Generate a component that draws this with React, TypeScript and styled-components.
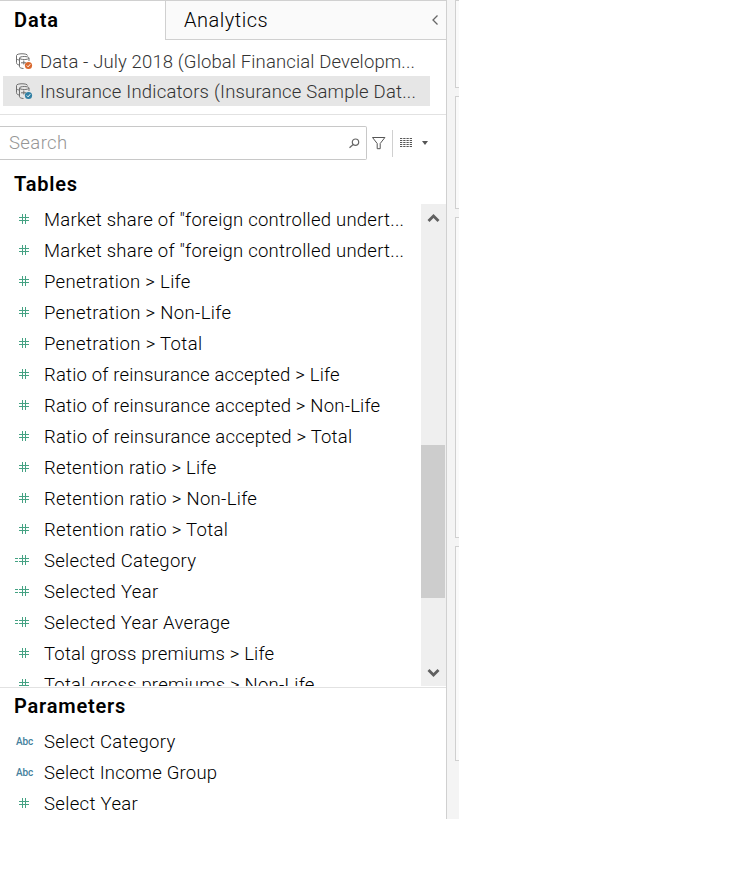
import React from "react";
import styled, { createGlobalStyle } from "styled-components";

const Global = createGlobalStyle`
  * { box-sizing: border-box; }
  body { margin: 0; background: #fff; font-family: Roboto, "Open Sans", sans-serif; font-size: 18.5px; font-weight: 300; color: #000; }
`;

const Screen = styled.div`
  width: 736px; height: 896px; display: flex; align-items: flex-start; background: #fff; overflow: hidden;
`;
const Pane = styled.aside`
  width: 447px; height: 819px; display: flex; flex-direction: column;
  border-right: 1px solid #d0d0d0; flex: none;
`;
const Tabs = styled.div`display: flex; height: 40px; flex: none; border-top: 1px solid #d0d0d0;`;
const ActiveTab = styled.div`
  width: 165px; padding-left: 14px; line-height: 39px; font-size: 20px; font-weight: 600; letter-spacing: 0.95px;
`;
const IdleTab = styled.div`
  flex: 1; display: flex; align-items: center; justify-content: space-between;
  padding: 0 7px 0 18px; font-size: 20px; line-height: 38px; letter-spacing: 0.5px;
  background: #fafafa; border-left: 1px solid #d0d0d0; border-bottom: 1px solid #d0d0d0;
`;
const Sources = styled.div`
  height: 75px; flex: none; padding: 6px 16px 0 3px; border-bottom: 1px solid #e2e2e2;
`;
const Source = styled.div<{ $selected?: boolean }>`
  height: 30px; display: flex; align-items: center; gap: 7px; padding-left: 13px;
  color: #333; background: ${(p) => (p.$selected ? "#e6e6e6" : "transparent")};
`;
const Label = styled.span<{ $track?: number }>`
  white-space: pre; line-height: 30px; letter-spacing: ${(p) => p.$track ?? 0}px;
`;
const SourceLabel = styled(Label)`padding-top: 1px;`;
const SearchRow = styled.div`height: 45px; flex: none; display: flex; align-items: center; padding-top: 11px;`;
const SearchBox = styled.div`
  width: 367px; height: 34px; flex: none; display: flex; align-items: center; justify-content: space-between;
  padding: 0 6px 0 9px; border: 1px solid #c8c8c8; border-left: 0; border-radius: 0 2px 2px 0;
  color: #969696;
`;
const Tools = styled.div`display: flex; align-items: center; padding-left: 5px;`;
const Rule = styled.span`width: 1px; height: 27px; background: #d0d0d0; margin: 0 7px 0 6px;`;
const Caret = styled.span`
  margin-left: 10px; border: 3.5px solid transparent; border-top: 4px solid #555; border-bottom: 0;
`;
const Heading = styled.h2<{ $height: number; $line: number }>`
  margin: 0; padding-left: 14px; flex: none; font-size: 20px; font-weight: 600; letter-spacing: 0.8px;
  height: ${(p) => p.$height}px; line-height: ${(p) => p.$line}px;
`;
const ListArea = styled.div`display: flex; height: 482px; flex: none; overflow: hidden;`;
const List = styled.div`flex: 1; overflow: hidden;`;
const Field = styled.div`height: 31px; display: flex; align-items: center;`;
const IconCell = styled.span`
  width: 44px; height: 31px; flex: none; display: flex; align-items: center; padding: 0 0 1px 14px;
`;
const Abc = styled.span`
  font-size: 10px; font-weight: 500; color: #457f9c; padding: 1px 0 0 2px; letter-spacing: -0.1px;
`;
const ScrollBar = styled.div`
  width: 25px; display: flex; flex-direction: column; align-items: flex-start; background: #efefef;
`;
const ScrollButton = styled.div`width: 25px; height: 28px; flex: none; display: grid; place-items: center;`;
const Thumb = styled.div`width: 24px; height: 153px; flex: none; margin: 213px 0 60px; background: #cdcdcd;`;
const Params = styled.section`flex: 1; margin-top: 1px; border-top: 1px solid #e2e2e2;`;
const Gutter = styled.div`
  width: 12px; height: 819px; flex: none; padding-left: 8px; background: #f4f4f4;
`;
const Shelf = styled.div<{ $height: number; $gap: number }>`
  height: ${(p) => p.$height}px; margin-bottom: ${(p) => p.$gap}px;
  border: 1px solid #d0d0d0; border-right: 0; background: #fafafa;
`;

const Hash = ({ calc }: { calc?: boolean }) => (
  <svg width="16" height="12" viewBox="0 0 16 12" stroke="#45a283" fill="none">
    <path d="M8.500 1v10M11.500 1v10M5 4.500h10M5 7.500h10" />
    {calc && <path d="M1 4.500h3M1 7.500h3" />}
  </svg>
);
const Database = ({ color }: { color: string }) => (
  <svg width="17" height="17" viewBox="0 0 17 17" fill="none" stroke="#707070" strokeWidth="1">
    <path d="M11.500 2.500C11.500.200.500.200.500 2.500v7.200c0 1.300 1.200 2 2.500 2.300M.500 5.500c.4 1 1.500 1.300 2.500 1.500" />
    <path d="M3.500 5c0-2 9.500-2 9.500 0s-9.500 2-9.500 0v8.800c0 .8 1.800 1.600 4 1.700M13 5v3M5 9.800h5M7.800 7.500v4" />
    <circle cx="12.500" cy="12.500" r="3.600" fill={color} stroke="none" />
    <path d="m10.800 12.500 1.300 1.300 2.200-2.600" stroke="#fff" />
  </svg>
);
const Chevron = ({ down }: { down?: boolean }) => (
  <svg width="14" height="12" viewBox="0 0 14 12" fill="none" stroke="#606060" strokeWidth="2.800">
    <path d={down ? "M1.500 4 6.500 9l5-5" : "M1.500 9l5-5 5 5"} />
  </svg>
);

type Item = { text: string; track?: number; kind?: "calc" | "abc" };
const tables: Item[] = [
  { text: 'Market share of "foreign controlled undert...', track: 0.24 },
  { text: 'Market share of "foreign controlled undert...', track: 0.24 },
  { text: "Penetration > Life", track: 0.32 },
  { text: "Penetration > Non-Life", track: 0.34 },
  { text: "Penetration > Total", track: 0.35 },
  { text: "Ratio of reinsurance accepted > Life", track: 0.18 },
  { text: "Ratio of reinsurance accepted > Non-Life", track: 0.2 },
  { text: "Ratio of reinsurance accepted > Total", track: 0.22 },
  { text: "Retention ratio > Life", track: 0.28 },
  { text: "Retention ratio > Non-Life", track: 0.3 },
  { text: "Retention ratio > Total", track: 0.3 },
  { text: "Selected Category", kind: "calc", track: 0.29 },
  { text: "Selected Year", kind: "calc", track: 0.32 },
  { text: "Selected Year Average", kind: "calc", track: 0.3 },
  { text: "Total gross premiums > Life", track: 0.18 },
  { text: "Total gross premiums > Non-Life", track: 0.2 },
];
const params: Item[] = [
  { text: "Select Category", kind: "abc", track: 0.26 },
  { text: "Select Income Group", kind: "abc", track: 0.21 },
  { text: "Select Year", track: 0.33 },
];

const FieldRow = ({ item }: { item: Item }) => (
  <Field>
    <IconCell>{item.kind === "abc" ? <Abc>Abc</Abc> : <Hash calc={item.kind === "calc"} />}</IconCell>
    <Label $track={item.track}>{item.text}</Label>
  </Field>
);

export default function App() {
  return (
    <Screen>
      <Global />
      <Pane>
        <Tabs>
          <ActiveTab>Data</ActiveTab>
          <IdleTab>
            <span>Analytics</span>
            <svg width="8" height="10" viewBox="0 0 8 10" fill="none" stroke="#666" strokeWidth="1.300"><path d="M6.500.5 2 5l4.500 4.500" /></svg>
          </IdleTab>
        </Tabs>
        <Sources>
          <Source><Database color="#d9692f" /><SourceLabel $track={0.13}>Data - July 2018 (Global Financial Developm...</SourceLabel></Source>
          <Source $selected><Database color="#3180a4" /><SourceLabel $track={0.21}>Insurance Indicators (Insurance Sample Dat...</SourceLabel></Source>
        </Sources>
        <SearchRow>
          <SearchBox>
            <Label $track={0.4}>Search</Label>
            <svg width="11" height="11" viewBox="0 0 11 11" fill="none" stroke="#666" strokeWidth="1.200"><circle cx="6.500" cy="4.200" r="3.200" /><path d="M4.200 6.500.5 9.800" /></svg>
          </SearchBox>
          <Tools>
            <svg width="14" height="14" viewBox="0 0 14 14" fill="none" stroke="#555"><path d="M.5 1.500h12.400L8.200 7.500v5.200h-3V7.500z" /></svg>
            <Rule />
            <svg width="12" height="10" viewBox="0 0 12 10" stroke="#555" strokeDasharray="2.300 .93"><path d="M0 .5h12M0 2.500h12M0 4.500h12M0 6.500h12M0 8.500h12" /></svg>
            <Caret />
          </Tools>
        </SearchRow>
        <Heading $height={44} $line={49}>Tables</Heading>
        <ListArea>
          <List>{tables.map((item, i) => <FieldRow key={i} item={item} />)}</List>
          <ScrollBar>
            <ScrollButton><Chevron /></ScrollButton>
            <Thumb />
            <ScrollButton><Chevron down /></ScrollButton>
          </ScrollBar>
        </ListArea>
        <Params>
          <Heading $height={38} $line={37}>Parameters</Heading>
          {params.map((item) => <FieldRow key={item.text} item={item} />)}
        </Params>
      </Pane>
      <Gutter>
        <Shelf $height={88} $gap={8} />
        <Shelf $height={113} $gap={8} />
        <Shelf $height={321} $gap={8} />
        <Shelf $height={215} $gap={0} />
      </Gutter>
    </Screen>
  );
}
